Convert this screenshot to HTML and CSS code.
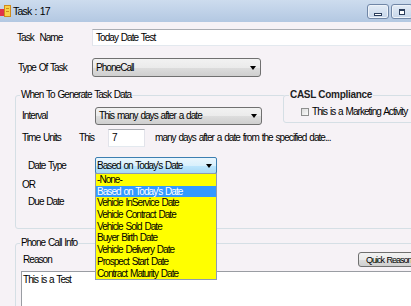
FILE: index.html
```html
<html>
    <head>
        <link rel="stylesheet" href="styles.css">
    </head>
    <body>
        <div class="window">
            <div class="titlebar">
                <svg class="app-icon" width="11" height="14" viewBox="0 0 11 14">
                    <rect x="0" y="5" width="4" height="7" fill="#e0334a"/>
                    <rect x="4.5" y="1.5" width="6" height="11" fill="#f7d24a" stroke="#d08a1c"/>
                    <rect x="6" y="4" width="3" height="1" fill="#d08a1c"/>
                    <rect x="6" y="7" width="3" height="1" fill="#d08a1c"/>
                </svg>
                <span class="title">Task : 17</span>
                <div class="caption">
                    <span class="cap-btn"><i class="min-glyph"></i></span>
                    <span class="cap-btn"><i class="max-glyph"></i></span>
                    <span class="cap-btn close"></span>
                </div>
            </div>

            <div class="form">
                <div class="row row-name">
                    <span class="lbl">Task&nbsp; Name</span>
                    <div class="textbox">Today Date Test</div>
                </div>
                <div class="row row-type">
                    <span class="lbl">Type Of Task</span>
                    <div class="combo">PhoneCall<span class="arrow"></span></div>
                </div>

                <fieldset class="group group-when">
                    <legend>When To Generate Task Data</legend>
                    <div class="when-body">
                        <div class="when-fields">
                            <div class="row row-interval">
                                <span class="lbl">Interval</span>
                                <div class="combo">This many days after a date<span class="arrow"></span></div>
                            </div>
                            <div class="row row-time">
                                <span class="lbl">Time Units</span>
                                <span class="this">This</span>
                                <div class="textbox">7</div>
                                <span class="hint">many days after a date from the specified date...</span>
                            </div>
                            <div class="row row-date">
                                <span class="lbl">Date Type</span>
                                <div class="combo focused">Based on Today's Date<span class="arrow"></span>
                                    <ul class="droplist">
                                        <li>-None-</li>
                                        <li class="selected">Based on Today's Date</li>
                                        <li>Vehicle InService Date</li>
                                        <li>Vehicle Contract Date</li>
                                        <li>Vehicle Sold Date</li>
                                        <li>Buyer Birth Date</li>
                                        <li>Vehicle Delivery Date</li>
                                        <li>Prospect Start Date</li>
                                        <li>Contract Maturity Date</li>
                                    </ul>
                                </div>
                            </div>
                            <div class="row row-or"><span class="lbl">OR</span></div>
                            <div class="row row-due"><span class="lbl">Due Date</span></div>
                        </div>

                        <fieldset class="group group-casl">
                            <legend>CASL Compliance</legend>
                            <div class="row row-check">
                                <span class="checkbox"></span>
                                <span>This is a Marketing Activity</span>
                            </div>
                        </fieldset>
                    </div>
                </fieldset>

                <fieldset class="group group-phone">
                    <legend>Phone Call Info</legend>
                    <div class="row row-reason">
                        <span class="lbl">Reason</span>
                        <div class="button">Quick Reason</div>
                    </div>
                    <div class="textarea">This is a Test</div>
                </fieldset>
            </div>
        </div>
    </body>
</html>
```

FILE: styles.css
```css
html, body{
    margin: 0;
    padding: 0;
}
body{
    width: 411px;
    height: 306px;
    overflow: hidden;
    background: #f6f2f6;
    font-family: "Liberation Sans", Arial, sans-serif;
    font-size: 10px;
    letter-spacing: -0.95px;
    word-spacing: 1px;
    line-height: 12px;
    color: #000;
    white-space: nowrap;
}
.window{
    width: 480px;
}

/* title bar */
.titlebar{
    height: 22px;
    display: flex;
    align-items: center;
    background: linear-gradient(#cddcee, #b3c8e2);
}
.app-icon{
    display: block;
    flex: none;
}
.title{
    margin-left: 2px;
    font-size: 10.5px;
    letter-spacing: -0.8px;
}
.caption{
    margin-left: auto;
    margin-right: 22px;
    display: flex;
    gap: 2px;
    align-self: flex-start;
    margin-top: 4px;
}
.cap-btn{
    width: 22px;
    height: 15px;
    box-sizing: border-box;
    border: 1px solid #7086a6;
    border-radius: 3px;
    background: linear-gradient(#e4ecf6, #c6d6ea);
    box-shadow: inset 0 0 0 1px #eef3f9;
    display: flex;
    align-items: center;
    justify-content: center;
}
.cap-btn.close{
    width: 43px;
    background: linear-gradient(#e8a493, #c74a32);
}
.min-glyph{
    width: 8px;
    height: 3px;
    margin-top: 5px;
    border: 1px solid #2c3e5c;
    background: #fff;
    box-sizing: border-box;
}
.max-glyph{
    width: 6px;
    height: 6px;
    border: 1px solid #2c3e5c;
    border-top-width: 2px;
    background: #fff;
    box-sizing: border-box;
}

/* generic controls */
.row{
    display: flex;
    align-items: center;
}
.lbl{
    flex: none;
}
.textbox{
    box-sizing: border-box;
    height: 100%;
    background: #fff;
    border: 1px solid;
    border-color: #abadb3 #e2e3ea #e3e9ef #e2e3ea;
    padding-left: 3px;
    display: flex;
    align-items: center;
}
.combo{
    position: relative;
    box-sizing: border-box;
    height: 100%;
    border: 1px solid #707070;
    border-radius: 3px;
    background: linear-gradient(#f2f2f2 0%, #ebebeb 50%, #dddddd 51%, #cfcfcf 100%);
    padding-left: 3px;
    display: flex;
    align-items: center;
}
.combo.focused{
    border-color: #3c7fb1;
    border-radius: 2px;
    background: linear-gradient(#eaf6fd 0%, #d9f0fc 50%, #bee6fd 51%, #a7d9f5 100%);
}
.arrow{
    margin-left: auto;
    margin-right: 4px;
    width: 0;
    height: 0;
    border-left: 3.5px solid transparent;
    border-right: 3.5px solid transparent;
    border-top: 4px solid #000;
}
.button{
    box-sizing: border-box;
    height: 100%;
    width: 70px;
    border: 1px solid #707070;
    border-radius: 3px;
    background: linear-gradient(#f2f2f2 0%, #ebebeb 50%, #dddddd 51%, #cfcfcf 100%);
    padding-left: 7px;
    font-size: 9px;
    letter-spacing: -1px;
    display: flex;
    align-items: center;
}

/* top rows */
.row-name{
    margin-top: 7px;
    height: 17px;
    padding-left: 17px;
}
.row-name .lbl{
    width: 75px;
}
.row-name .textbox{
    width: 400px;
}
.row-type{
    margin-top: 12px;
    height: 19px;
    padding-left: 18px;
}
.row-type .lbl{
    width: 74px;
}
.row-type .combo{
    width: 169px;
}

/* group boxes */
.group{
    margin: 0;
    padding: 0;
    min-width: 0;
    border: 1px solid #d5dfe5;
    border-radius: 3px;
}
.group legend{
    margin-left: 4px;
    padding: 0 1px;
    line-height: 12px;
}
.group-when{
    margin: 12px 0 0 15px;
    width: 455px;
}
.when-body{
    display: flex;
    align-items: flex-start;
}
.when-fields{
    width: 267px;
    flex: none;
    box-sizing: border-box;
    padding: 0 0 20px 6px;
}
.row-interval{
    margin-top: 6px;
    height: 18px;
}
.row-interval .lbl{
    width: 73px;
}
.row-interval .combo{
    width: 167px;
}
.row-time{
    margin-top: 4px;
    height: 18px;
}
.row-time .lbl{
    width: 57px;
}
.this{
    width: 29px;
    flex: none;
}
.row-time .textbox{
    width: 37px;
    flex: none;
}
.hint{
    margin-left: 10px;
}
.row-date{
    margin-top: 10px;
    height: 17px;
    padding-left: 6px;
}
.row-date .lbl{
    width: 67px;
}
.row-date .combo{
    width: 122px;
    padding-left: 1px;
}
.row-or{
    margin-top: 5px;
    height: 12px;
}
.row-due{
    margin-top: 5px;
    height: 12px;
    padding-left: 6px;
}

/* dropdown list of the date type combo */
.droplist{
    position: absolute;
    top: 100%;
    left: -1px;
    width: 122px;
    box-sizing: border-box;
    margin: 0;
    padding: 0;
    list-style: none;
    background: #ffff00;
    border: 1px solid #8d9bb3;
    z-index: 2;
}
.droplist li{
    height: 11.7px;
    line-height: 11.7px;
    padding-left: 1px;
}
.droplist li.selected{
    background: #3399ff;
    color: #fff;
}

/* CASL box */
.group-casl{
    margin-top: -12px;
    width: 150px;
    flex: none;
    background: #f6f2f6;
}
.group-casl legend{
    margin-left: 5px;
    font-size: 10px;
    font-weight: bold;
    letter-spacing: -0.3px;
    word-spacing: 0;
    color: #1e1e1e;
    background: #f6f2f6;
}
.row-check{
    margin-top: 4px;
    height: 14px;
    padding: 0 0 3px 17px;
}
.checkbox{
    width: 8px;
    height: 8px;
    box-sizing: border-box;
    border: 1px solid #8e8f8f;
    background: linear-gradient(135deg, #dcdcdc, #fbfbfb);
    margin-right: 3px;
    flex: none;
}

/* phone call info */
.group-phone{
    margin: 8px 0 0 15px;
    width: 455px;
    height: 120px;
}
.row-reason{
    margin-top: 3px;
    height: 15px;
    padding-left: 7px;
}
.row-reason .lbl{
    width: 335px;
}
.textarea{
    margin: 4px 0 0 5px;
    height: 80px;
    background: #fff;
    border: 1px solid #9a9da3;
    padding: 2px 1px;
}
```
